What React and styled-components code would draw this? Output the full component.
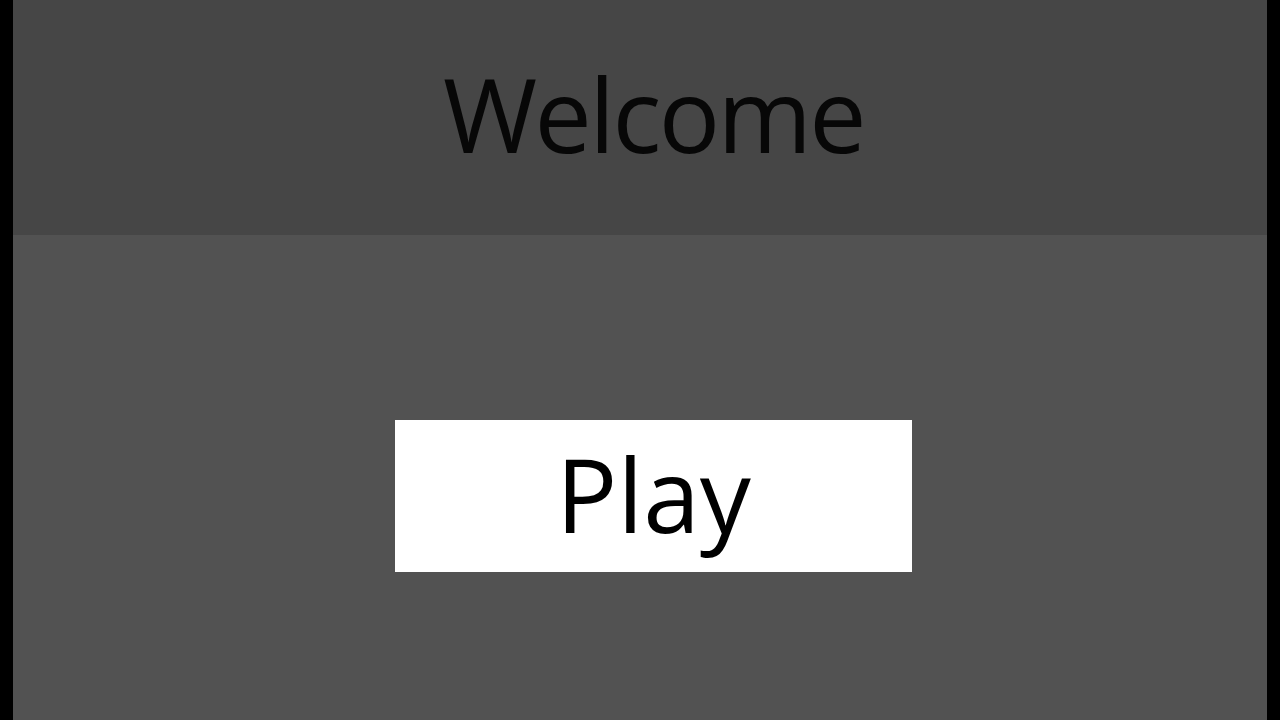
import React from 'react'
import styled, { createGlobalStyle } from 'styled-components'

const GlobalStyle = createGlobalStyle`
  html, body {
    margin: 0;
    padding: 0;
    background: #000;
    font-family: "Open Sans", "Noto Sans", sans-serif;
  }
`;

const Frame = styled.div`
  width: 1280px;
  height: 720px;
  padding: 0 13px;
  box-sizing: border-box;
  background: #000;
  display: flex;
`;

const Screen = styled.div`
  flex: 1;
  display: flex;
  flex-direction: column;
  background: #525252;
`;

const Header = styled.header`
  height: 235px;
  box-sizing: border-box;
  padding: 0 0 8px 27px;
  background: #464646;
  display: flex;
  align-items: center;
  justify-content: center;
`;

const Title = styled.h1`
  margin: 0;
  font-weight: 400;
  font-size: 102px;
  line-height: 1;
  color: #070707;
  letter-spacing: -2.6px;
`;

const Body = styled.main`
  flex: 1;
  display: flex;
  justify-content: center;
  align-items: flex-start;
  padding: 185px 0 0 27px;
`;

const PlayButton = styled.button`
  width: 517px;
  height: 152px;
  padding: 0 0 4px;
  background: #fff;
  border: none;
  color: #000;
  font-family: inherit;
  font-size: 102px;
  line-height: 1;
  letter-spacing: 0;
  cursor: pointer;
`;

export default function App() {
  return (
    <>
      <GlobalStyle />
      <Frame>
        <Screen>
          <Header>
            <Title>Welcome</Title>
          </Header>
          <Body>
            <PlayButton>Play</PlayButton>
          </Body>
        </Screen>
      </Frame>
    </>
  )
}
